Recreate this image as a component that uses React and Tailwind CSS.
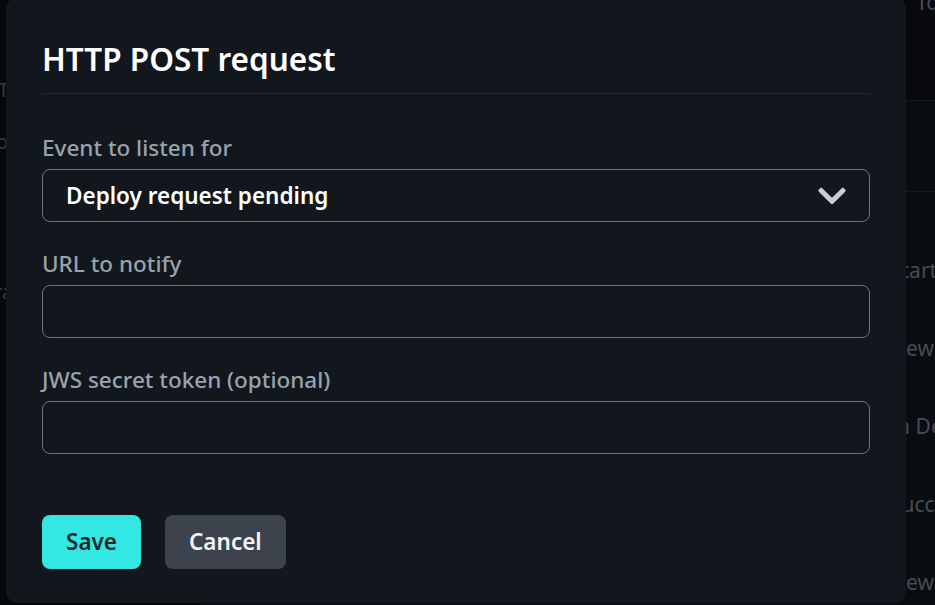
import React from 'react';

const font = { fontFamily: '"Noto Sans", "Open Sans", sans-serif' };

const ChevronDown = () => (
  <svg className="w-[28px] h-[32px]" viewBox="0 0 448 512" fill="currentColor">
    <path d="M207.029 381.476L12.686 187.132c-9.373-9.373-9.373-24.569 0-33.941l22.667-22.667c9.357-9.357 24.522-9.375 33.901-.04L224 284.505l154.745-154.021c9.379-9.335 24.544-9.317 33.901.04l22.667 22.667c9.373 9.373 9.373 24.569 0 33.941L240.971 381.476c-9.373 9.372-24.569 9.372-33.942 0z" />
  </svg>
);

const Field = ({ label, children, className = '' }) => (
  <div className={className}>
    <label className="block text-[22.5px] leading-[28px] font-medium text-[#9aa2ad] mb-[7px]">{label}</label>
    {children}
  </div>
);

const BackgroundPage = () => (
  <div className="absolute inset-0 flex">
    {/* sidebar peeking out on the left */}
    <div className="w-[200px] bg-[#05070b] text-[#353a42] text-[20px] overflow-hidden">
      <div className="-ml-[2px] pt-[76px] leading-[28px]">T</div>
      <div className="-ml-[4px] pt-[24px] leading-[28px]">o</div>
      <div className="-ml-[6px] pt-[122px] leading-[28px]">ra</div>
    </div>
    {/* table peeking out on the right */}
    <div className="flex-1 bg-[#090c10] text-[#474c54] text-[21px] overflow-hidden">
      <div className="h-[101px] flex flex-col bg-[#07090d] border-b border-[#161a20] pl-[716px]">
        <div className="-mt-[12px] leading-[28px]">To</div>
      </div>
      <div className="h-[91px] border-b border-[#14181e]" />
      <div className="pl-[690px] pt-[40px]">
        {['Start', 'New', 'In Deploy', 'Succeeded', 'New'].map((t, i) => (
          <div key={i} className="h-[78px] flex items-center whitespace-nowrap">{t}</div>
        ))}
      </div>
    </div>
  </div>
);

export default function App() {
  return (
    <div className="relative w-full h-[605px] overflow-hidden bg-[#05070b]" style={font}>
      <BackgroundPage />

      <div className="absolute inset-0 flex items-start">
        <div className="w-[900px] ml-[6px] -mt-[3px] h-[606px] bg-[#12171e] rounded-[12px] px-[36px] pt-[42px]">
          <h2 className="text-[31.5px] leading-[40px] font-semibold text-white pb-[14px] border-b border-[#242a32]">
            HTTP POST request
          </h2>

          <div className="pt-[40px]">
            <Field label="Event to listen for">
              <button className="w-full h-[53px] flex items-center justify-between pl-[23px] pr-[23px] border border-[#6f757d] rounded-[8px] bg-[#12171e] text-white text-[22.5px] font-semibold">
                <span>Deploy request pending</span>
                <span className="text-[#c9cdd2]">
                  <ChevronDown />
                </span>
              </button>
            </Field>

            <Field label="URL to notify" className="mt-[28px]">
              <input type="text" className="w-full h-[53px] border border-[#6f757d] rounded-[8px] bg-[#12171e] px-[23px] text-white text-[20px] outline-none" />
            </Field>

            <Field label="JWS secret token (optional)" className="mt-[28px]">
              <input type="password" className="w-full h-[53px] border border-[#6f757d] rounded-[8px] bg-[#12171e] px-[23px] text-white text-[20px] outline-none" />
            </Field>
          </div>

          <div className="flex gap-[24px] mt-[61px]">
            <button className="h-[54px] px-[24px] rounded-[8px] bg-[#33e8e2] text-[#132a2d] text-[22.5px] font-semibold">
              Save
            </button>
            <button className="h-[54px] px-[24px] rounded-[8px] bg-[#3d434c] text-[#f3f4f6] text-[22.5px] font-semibold">
              Cancel
            </button>
          </div>
        </div>
      </div>
    </div>
  );
}
